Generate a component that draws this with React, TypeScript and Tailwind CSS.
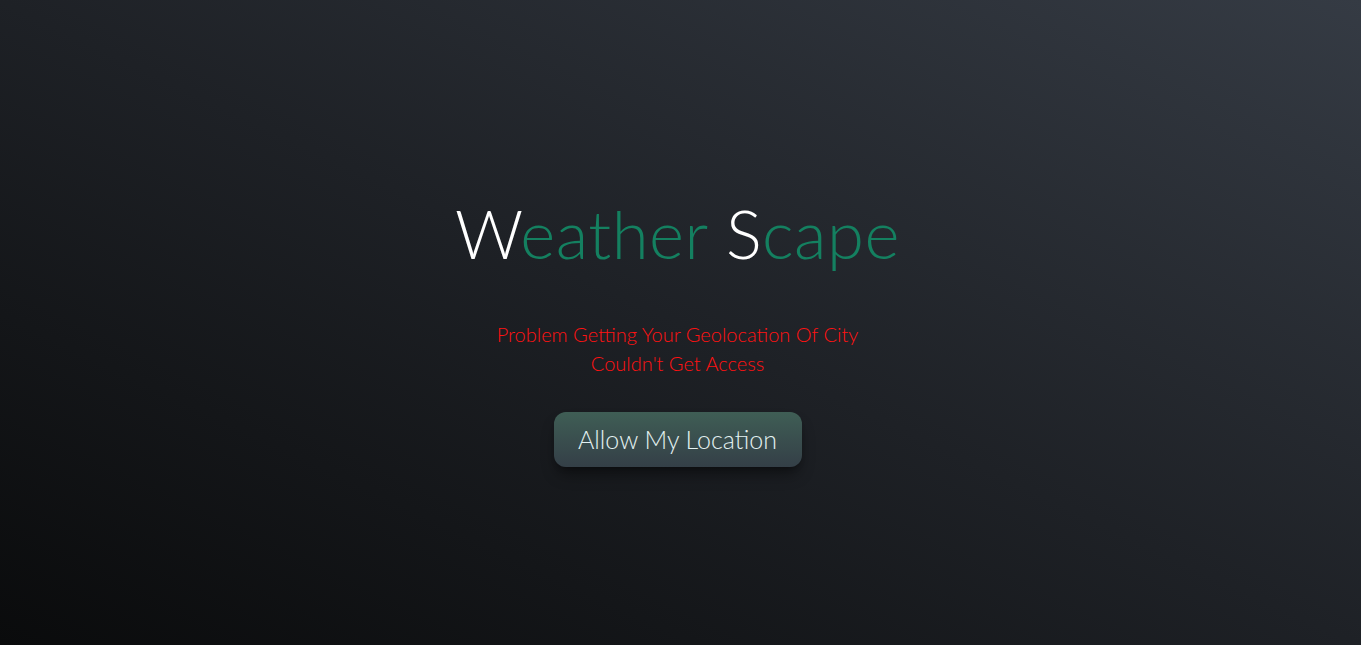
function App() {
  return (
    <div
      className="flex flex-col items-center justify-center h-screen w-full bg-gradient-to-tr from-[#0a0b0c] via-[#1e2126] to-[#353b44] pt-[22px] pr-[6px]"
      style={{ fontFamily: "Lato, 'Open Sans', sans-serif" }}
    >
      <h1 className="text-[67px] font-light leading-none tracking-[0.5px] text-[#148060]">
        <span className="text-white">W</span>eather{" "}
        <span className="text-white">S</span>cape
      </h1>
      <div className="mt-[53px] text-center text-[20px] leading-[29px] font-light text-[#ff1212]">
        <p>Problem Getting Your Geolocation Of City</p>
        <p>Couldn't Get Access</p>
      </div>
      <button className="mt-[34px] h-[55px] w-[248px] rounded-xl bg-gradient-to-b from-[#3f5e55] to-[#343f47] text-[25px] font-light text-[#e3f1f1] shadow-lg shadow-black/40">
        Allow My Location
      </button>
    </div>
  );
}

export default App;
